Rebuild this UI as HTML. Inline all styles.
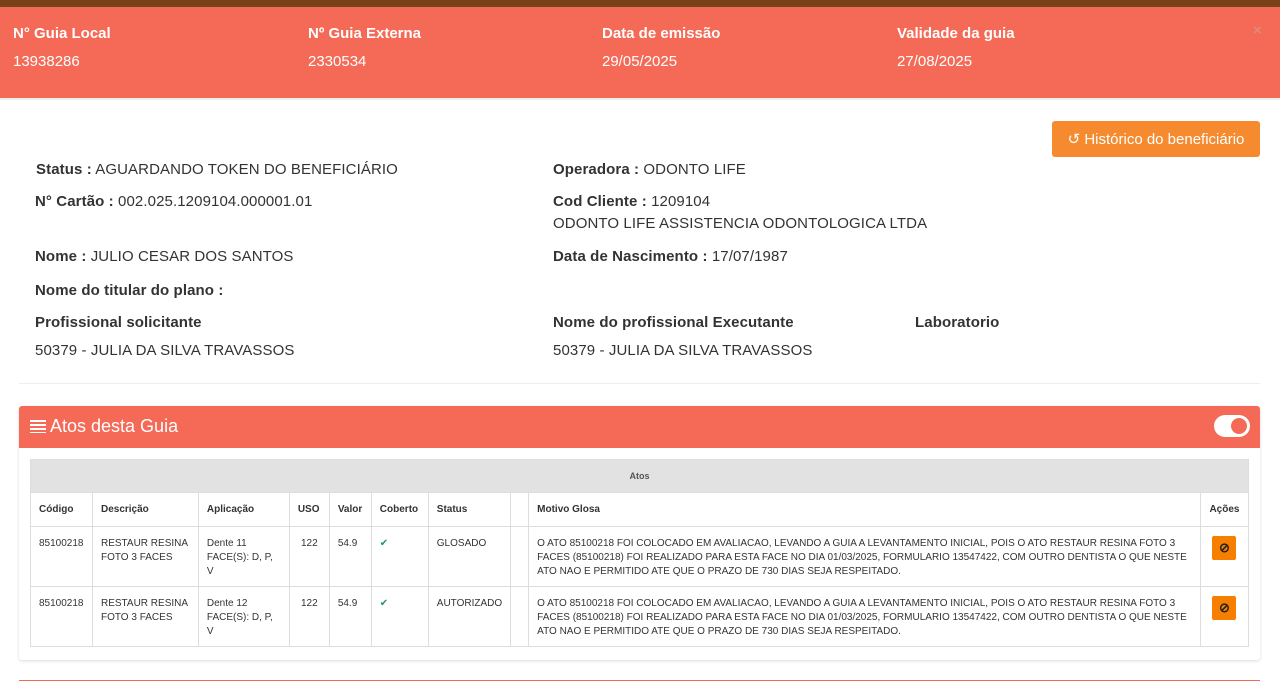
<!DOCTYPE html>
<html><head><meta charset="utf-8"><style>
*{box-sizing:border-box;margin:0;padding:0}
body{width:1280px;height:681px;overflow:hidden;background:#fff;font-family:"Liberation Sans",sans-serif;color:#333;position:relative}
.a{position:absolute;white-space:nowrap}
.top{position:absolute;left:0;top:0;width:1280px;height:7px;background:#7a4218}
.hdr{position:absolute;left:0;top:7px;width:1280px;height:91px;background:#f46a57;color:#fff}
.hdr b{font-size:15px;position:absolute;top:18px}
.hdr span{font-size:15px;position:absolute;top:46px}
.lbl{font-size:15px;color:#333;letter-spacing:0.1px}
.lbl b{font-weight:bold}
table{position:absolute;left:30px;top:459px;width:1219px;border-collapse:collapse;font-size:10px;color:#333}
td,th{border:1px solid #ddd;vertical-align:top;text-align:left;padding:0 8px}
th{font-weight:bold;height:34px;vertical-align:middle}
td{padding-top:10px;line-height:14px;height:60px}
.btn{display:inline-block;width:24px;height:24px;background:#f77f00;border-radius:2px;text-align:center;line-height:24px;font-size:13px;font-weight:bold;color:#222}
</style></head><body>
<div class="top"></div>
<div class="hdr">
<b style="left:13px">N° Guia Local</b><span style="left:13px">13938286</span>
<b style="left:308px">Nº Guia Externa</b><span style="left:308px">2330534</span>
<b style="left:602px">Data de emissão</b><span style="left:602px">29/05/2025</span>
<b style="left:897px">Validade da guia</b><span style="left:897px">27/08/2025</span>
<span style="left:1253px;top:15px;font-size:15px;color:#e0897c;font-weight:bold">×</span>
</div>
<div class="a" style="left:0;top:98px;width:1280px;height:2px;background:#eee"></div>
<div class="a" style="left:1052px;top:121px;width:208px;height:36px;background:#f68a2e;border-radius:3px;color:#fff;font-size:15px;line-height:38px;text-align:center">&#x21BA; Histórico do beneficiário</div>
<div class="a lbl" style="left:36px;top:161px"><b>Status :</b> AGUARDANDO TOKEN DO BENEFICIÁRIO</div>
<div class="a lbl" style="left:553px;top:161px"><b>Operadora :</b> ODONTO LIFE</div>
<div class="a lbl" style="left:35px;top:193px"><b>N° Cartão :</b> 002.025.1209104.000001.01</div>
<div class="a lbl" style="left:553px;top:193px"><b>Cod Cliente :</b> 1209104</div>
<div class="a lbl" style="left:553px;top:215px">ODONTO LIFE ASSISTENCIA ODONTOLOGICA LTDA</div>
<div class="a lbl" style="left:35px;top:248px"><b>Nome :</b> JULIO CESAR DOS SANTOS</div>
<div class="a lbl" style="left:553px;top:248px"><b>Data de Nascimento :</b> 17/07/1987</div>
<div class="a lbl" style="left:35px;top:282px"><b>Nome do titular do plano :</b></div>
<div class="a lbl" style="left:35px;top:314px"><b>Profissional solicitante</b></div>
<div class="a lbl" style="left:553px;top:314px"><b>Nome do profissional Executante</b></div>
<div class="a lbl" style="left:915px;top:314px"><b>Laboratorio</b></div>
<div class="a lbl" style="left:35px;top:342px">50379 - JULIA DA SILVA TRAVASSOS</div>
<div class="a lbl" style="left:553px;top:342px">50379 - JULIA DA SILVA TRAVASSOS</div>
<div class="a" style="left:19px;top:383px;width:1241px;height:1px;background:#eee"></div>
<div class="a" style="left:19px;top:406px;width:1241px;height:254px;box-shadow:0 1px 3px rgba(0,0,0,.15);border-radius:3px"></div>
<div class="a" style="left:19px;top:406px;width:1241px;height:42px;background:#f46a57;border-radius:3px 3px 0 0;color:#fff;font-size:18px;line-height:40px;padding-left:11px">
<span style="display:inline-block;width:16px;height:13px;vertical-align:-1px;background:repeating-linear-gradient(#fff 0 2px,transparent 2px 4px)"></span> Atos desta Guia</div>
<div class="a" style="left:1214px;top:415px;width:36px;height:22px;background:#fff;border-radius:11px"><div style="position:absolute;right:3px;top:3px;width:16px;height:16px;border-radius:50%;background:#f46a57"></div></div>
<table>
<tr><th colspan="11" style="background:#e2e2e2;text-align:center;height:33px;color:#555;font-size:9px">Atos</th></tr>
<tr><th style="width:62px">Código</th><th style="width:106px">Descrição</th><th style="width:91px">Aplicação</th><th style="width:40px">USO</th><th style="width:42px">Valor</th><th style="width:57px">Coberto</th><th style="width:82px">Status</th><th style="width:18px"></th><th style="width:673px">Motivo Glosa</th><th style="width:48px;text-align:center">Ações</th></tr>
<tr><td>85100218</td><td>RESTAUR RESINA FOTO 3 FACES</td><td>Dente 11 FACE(S): D, P, V</td><td style="text-align:center">122</td><td>54.9</td><td style="color:#1a9a5a">✔</td><td>GLOSADO</td><td></td><td>O ATO 85100218 FOI COLOCADO EM AVALIACAO, LEVANDO A GUIA A LEVANTAMENTO INICIAL, POIS O ATO RESTAUR RESINA FOTO 3 FACES (85100218) FOI REALIZADO PARA ESTA FACE NO DIA 01/03/2025, FORMULARIO 13547422, COM OUTRO DENTISTA O QUE NESTE ATO NAO E PERMITIDO ATE QUE O PRAZO DE 730 DIAS SEJA RESPEITADO.</td><td style="text-align:center;padding-top:9px"><span class="btn">⊘</span></td></tr>
<tr><td>85100218</td><td>RESTAUR RESINA FOTO 3 FACES</td><td>Dente 12 FACE(S): D, P, V</td><td style="text-align:center">122</td><td>54.9</td><td style="color:#1a9a5a">✔</td><td>AUTORIZADO</td><td></td><td>O ATO 85100218 FOI COLOCADO EM AVALIACAO, LEVANDO A GUIA A LEVANTAMENTO INICIAL, POIS O ATO RESTAUR RESINA FOTO 3 FACES (85100218) FOI REALIZADO PARA ESTA FACE NO DIA 01/03/2025, FORMULARIO 13547422, COM OUTRO DENTISTA O QUE NESTE ATO NAO E PERMITIDO ATE QUE O PRAZO DE 730 DIAS SEJA RESPEITADO.</td><td style="text-align:center;padding-top:9px"><span class="btn">⊘</span></td></tr>
</table>
<div class="a" style="left:19px;top:680px;width:1241px;height:1px;background:#f46a57"></div>
</body></html>
